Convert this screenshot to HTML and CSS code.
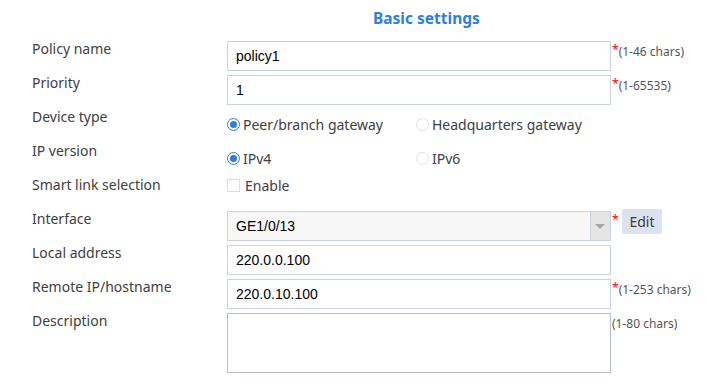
FILE: index.html
```html
<!DOCTYPE html>
<html lang="en">
<head>
    <meta charset="UTF-8">
    <title>Basic settings</title>
    <link rel="stylesheet" href="styles.css">
</head>
<body>
    <div class="settings">
        <h2 class="settings-title">Basic settings</h2>

        <div class="form">
            <div class="row">
                <label class="label">Policy name</label>
                <div class="field">
                    <input class="text-input" type="text" value="policy1">
                    <span class="hint"><span class="req">*</span>(1-46 chars)</span>
                </div>
            </div>

            <div class="row">
                <label class="label">Priority</label>
                <div class="field">
                    <input class="text-input" type="text" value="1">
                    <span class="hint"><span class="req">*</span>(1-65535)</span>
                </div>
            </div>

            <div class="row">
                <label class="label">Device type</label>
                <div class="field choices">
                    <span class="choice choice-wide"><span class="radio checked"></span>Peer/branch gateway</span>
                    <span class="choice"><span class="radio"></span>Headquarters gateway</span>
                </div>
            </div>

            <div class="row">
                <label class="label">IP version</label>
                <div class="field choices">
                    <span class="choice choice-wide"><span class="radio checked"></span>IPv4</span>
                    <span class="choice"><span class="radio"></span>IPv6</span>
                </div>
            </div>

            <div class="row row-short">
                <label class="label">Smart link selection</label>
                <div class="field check-field">
                    <span class="choice"><span class="checkbox"></span>Enable</span>
                </div>
            </div>

            <div class="row">
                <label class="label">Interface</label>
                <div class="field">
                    <div class="select">
                        <span class="select-value">GE1/0/13</span>
                        <span class="select-arrow"></span>
                    </div>
                    <span class="hint hint-edit"><span class="req">*</span></span>
                    <button class="edit-button">Edit</button>
                </div>
            </div>

            <div class="row">
                <label class="label">Local address</label>
                <div class="field">
                    <input class="text-input" type="text" value="220.0.0.100">
                </div>
            </div>

            <div class="row">
                <label class="label">Remote IP/hostname</label>
                <div class="field">
                    <input class="text-input" type="text" value="220.0.10.100">
                    <span class="hint"><span class="req">*</span>(1-253 chars)</span>
                </div>
            </div>

            <div class="row row-tall">
                <label class="label">Description</label>
                <div class="field">
                    <textarea class="text-area"></textarea>
                    <span class="hint">(1-80 chars)</span>
                </div>
            </div>
        </div>
    </div>
</body>
</html>
```

FILE: styles.css
```css
* {
    margin: 0;
    padding: 0;
    box-sizing: border-box;
}

body {
    font-family: "Noto Sans", "Open Sans", sans-serif;
    background: #fff;
    color: #3a3a3a;
}

.settings {
    width: 724px;
    padding-top: 7px;
}

.settings-title {
    margin-left: 373px;
    font-size: 15.5px;
    font-weight: 700;
    line-height: 22px;
    color: #2f7fdc;
    height: 34px;
}

.form {
    display: flex;
    flex-direction: column;
    gap: 4px;
    padding-left: 32px;
}

.row {
    display: flex;
    height: 30px;
}

.row-short {
    height: 30px;
}

.row-tall {
    height: 60px;
}

.label {
    width: 195px;
    font-size: 14px;
    line-height: 16px;
    color: #404040;
}

.field {
    display: flex;
    align-items: flex-start;
}

.text-input {
    width: 384px;
    height: 30px;
    border: 1px solid #c8d2e0;
    padding: 0 8px;
    font-family: "Liberation Sans", Arial, sans-serif;
    font-size: 14px;
    color: #000;
    outline: none;
}

.text-area {
    width: 384px;
    height: 60px;
    border: 1px solid #b9bfcd;
    resize: none;
    outline: none;
}

.hint {
    font-size: 12px;
    line-height: 14px;
    padding-top: 4px;
    color: #555;
    padding-left: 1px;
}

.req {
    color: #f00;
    font-size: 12px;
    position: relative;
    top: -2px;
}

.choices,
.check-field {
    align-items: center;
    height: 30px;
}

.check-field {
    height: 16px;
}

.choice {
    display: inline-flex;
    align-items: center;
    font-size: 14px;
    color: #404040;
}

.choice-wide {
    width: 189px;
}

.radio {
    width: 13px;
    height: 13px;
    border-radius: 50%;
    border: 1px solid #e2e2e2;
    margin-right: 3px;
    position: relative;
}

.radio.checked {
    border-color: #2d7ce0;
}

.radio.checked::after {
    content: "";
    position: absolute;
    left: 2px;
    top: 2px;
    width: 7px;
    height: 7px;
    border-radius: 50%;
    background: #2d7ce0;
}

.checkbox {
    width: 13px;
    height: 13px;
    border: 1px solid #dcdcdc;
    margin-right: 5px;
}

.select {
    display: flex;
    width: 384px;
    height: 30px;
    border: 1px solid #c8d2e0;
    background: #f7f7f7;
}

.select-value {
    flex: 1;
    padding-left: 8px;
    font-family: "Liberation Sans", Arial, sans-serif;
    font-size: 14px;
    line-height: 28px;
    color: #000;
}

.select-arrow {
    width: 20px;
    background: #e4e4e4;
    border-left: 1px solid #c8d2e0;
    position: relative;
}

.select-arrow::after {
    content: "";
    position: absolute;
    left: 4px;
    top: 12px;
    border-left: 5px solid transparent;
    border-right: 5px solid transparent;
    border-top: 5px solid #a8a8a8;
}

.hint-edit {
    width: 11px;
}

.edit-button {
    margin-top: -2px;
    width: 40px;
    height: 25px;
    border: none;
    border-radius: 2px;
    background: #dde3ee;
    color: #3a3a3a;
    font-family: "Noto Sans", sans-serif;
    font-size: 14px;
}
```
